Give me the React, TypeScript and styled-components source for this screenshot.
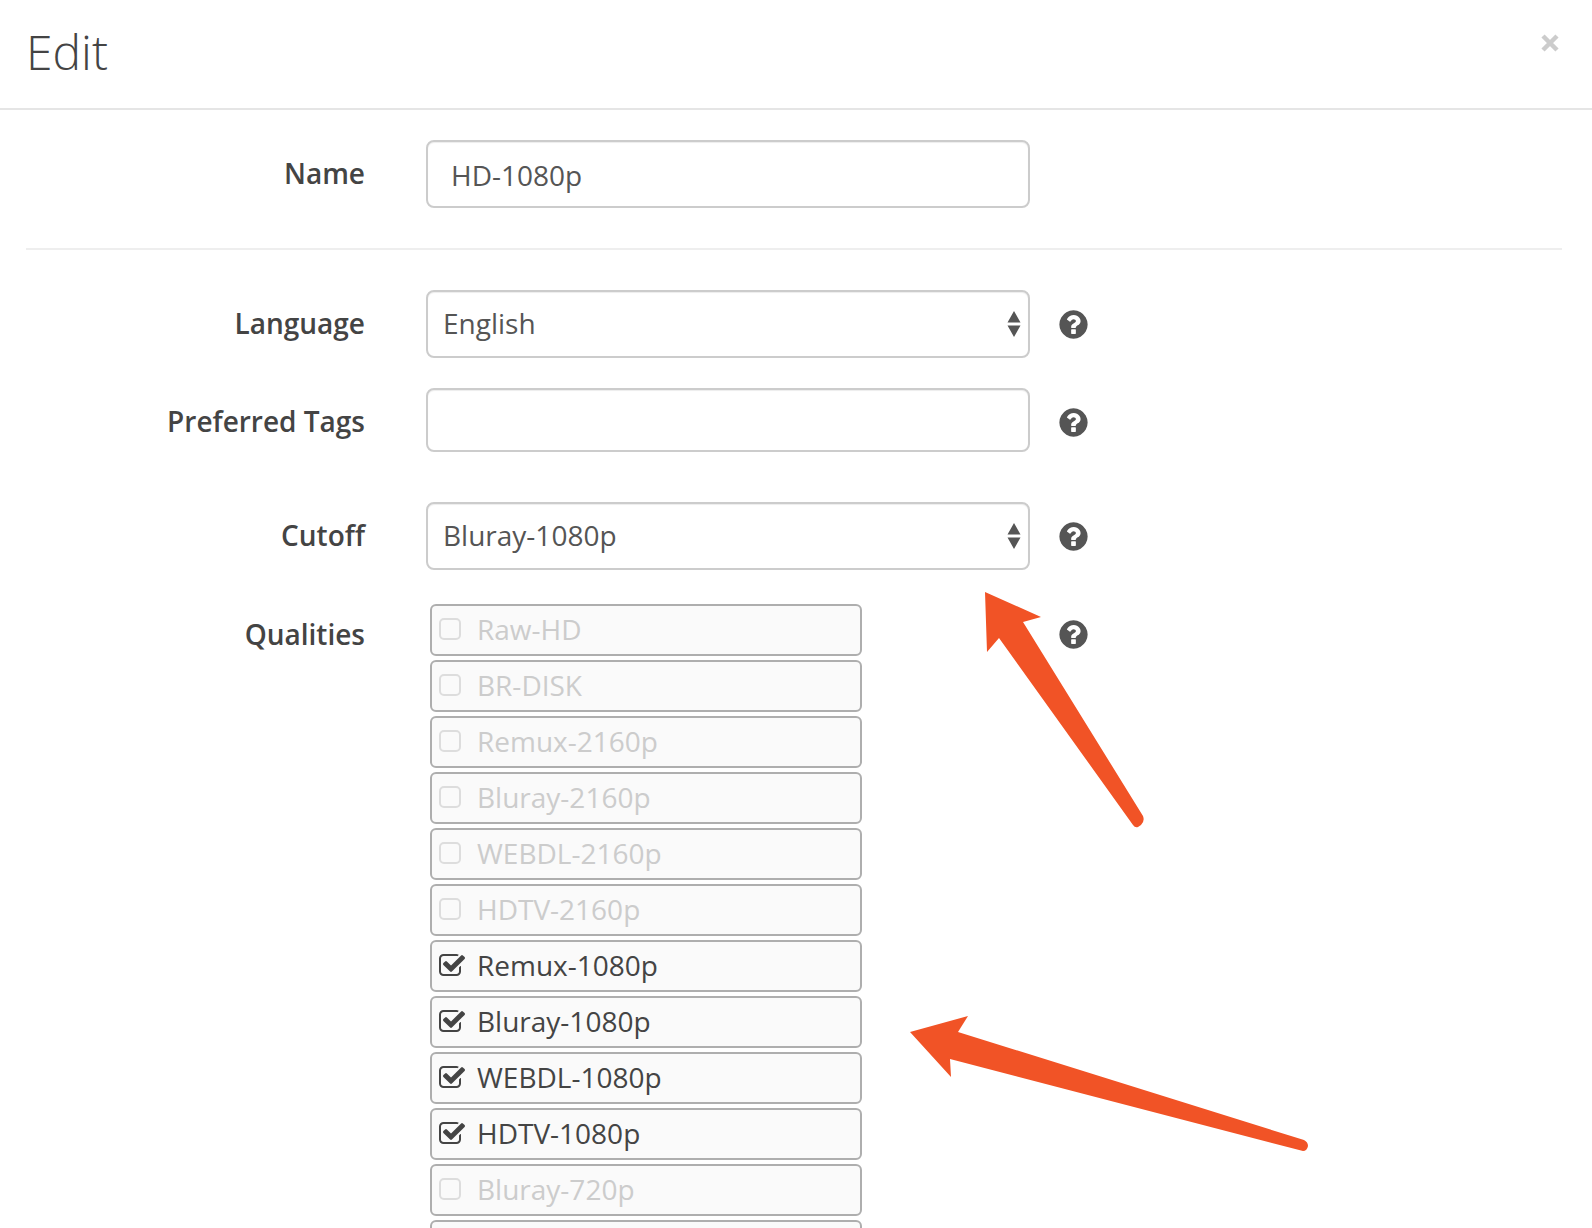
import styled, { createGlobalStyle } from "styled-components";

const GlobalStyle = createGlobalStyle`
  html, body {
    margin: 0;
    height: 1228px;
    overflow: hidden;
    background: #fff;
  }
  body {
    font-family: "Open Sans", "Noto Sans", sans-serif;
    color: #555;
  }
`;

const Modal = styled.div`
  position: relative;
  width: 1592px;
  height: 1228px;
  overflow: hidden;
`;

const Header = styled.header`
  height: 108px;
  border-bottom: 2px solid #e5e5e5;
  display: flex;
  justify-content: space-between;
  padding: 0 32px 0 26px;
`;

const Title = styled.h3`
  margin: 22px 0 0;
  font-size: 48px;
  line-height: 60px;
  font-weight: 300;
  color: #444;
`;

const CloseIcon = styled.svg`
  width: 20px;
  height: 20px;
  margin-top: 33px;
  color: #ccc;
`;

const Body = styled.div`
  padding: 30px 30px 0 26px;
`;

const FormRow = styled.div<{ $gap: number }>`
  display: grid;
  grid-template-columns: 339px 665px 1fr;
  margin-bottom: ${(p) => p.$gap}px;
`;

const Divider = styled.hr`
  border: 0;
  border-top: 2px solid #eee;
  margin: 0 0 40px;
`;

const Label = styled.label<{ $height: number }>`
  text-align: right;
  font-size: 28px;
  font-weight: 600;
  color: #444;
  line-height: ${(p) => p.$height}px;
`;

const Control = styled.div`
  margin-left: 61px;
  width: 604px;
`;

const TextInput = styled.input<{ $height: number }>`
  display: block;
  box-sizing: border-box;
  width: 604px;
  height: ${(p) => p.$height}px;
  border: 2px solid #ccc;
  border-radius: 8px;
  box-shadow: inset 0 1px 1px rgba(0, 0, 0, 0.075);
  padding: 2px 23px 0;
  font: 400 28px "Open Sans", sans-serif;
  color: #555;
  outline: none;
`;

const SelectWrap = styled.div`
  position: relative;
  width: 604px;
  height: 68px;
`;

const Select = styled.select<{ $nudge: number }>`
  display: block;
  appearance: none;
  box-sizing: border-box;
  width: 100%;
  height: 100%;
  background: #fff;
  border: 2px solid #ccc;
  border-radius: 8px;
  box-shadow: inset 0 1px 1px rgba(0, 0, 0, 0.075);
  padding: 0 15px ${(p) => p.$nudge}px;
  font: 400 28px "Open Sans", sans-serif;
  color: #555;
  outline: none;
`;

const SelectArrows = styled.svg`
  position: absolute;
  right: 9px;
  top: 20px;
  width: 14px;
  height: 28px;
  color: #555;
  pointer-events: none;
`;

const HelpIcon = styled.svg<{ $top: number }>`
  width: 33px;
  height: 33px;
  margin-top: ${(p) => p.$top}px;
  margin-left: 27px;
  color: #555;
`;

const QualityList = styled.div`
  display: flex;
  flex-direction: column;
  gap: 4px;
  padding-left: 4px;
  width: 432px;
`;

const QualityRow = styled.div<{ $on: boolean }>`
  flex: none;
  box-sizing: border-box;
  height: 52px;
  display: flex;
  align-items: center;
  gap: 12px;
  padding: 0 0 3px 8px;
  background: #fafafa;
  border: 2px solid #aeaeae;
  border-radius: 6px;
  font-size: 28px;
  color: ${(p) => (p.$on ? "#444" : "#ccc")};
`;

const EmptyBox = styled.span`
  flex: none;
  box-sizing: border-box;
  width: 22px;
  height: 22px;
  margin: 1px 4px 0 -1px;
  border: 2px solid #ddd;
  border-radius: 5px;
`;

const CheckIcon = styled.svg`
  flex: none;
  width: 28px;
  height: 28px;
  margin: 2px -1px 0 -2px;
  color: #444;
`;

const ArrowOverlay = styled.svg`
  position: absolute;
  left: 0;
  top: 0;
  width: 1592px;
  height: 1228px;
  pointer-events: none;
`;

const questionPath =
  "M1024 1376v-192q0-14-9-23t-23-9h-192q-14 0-23 9t-9 23v192q0 14 9 23t23 9h192q14 0 23-9t9-23zm256-672q0-88-55.5-163t-138.5-116-170-41q-243 0-371 213-15 24 8 42l132 100q7 6 19 6 16 0 25-12 53-68 86-92 34-24 86-24 48 0 85.5 26t37.5 59q0 38-20 61t-68 45q-63 28-115.5 86.5t-52.5 125.5v36q0 14 9 23t23 9h192q14 0 23-9t9-23q0-19 21.5-49.5t54.5-49.5q32-18 49-28.5t46-35 44.5-48 28-60.5 12.5-81zm384 192q0 209-103 385.5t-279.5 279.5-385.5 103-385.5-103-279.5-279.5-103-385.5 103-385.5 279.5-279.5 385.5-103 385.5 103 279.5 279.5 103 385.5z";

const checkPath =
  "M1472 930v318q0 119-84.5 203.5t-203.5 84.5h-832q-119 0-203.5-84.5t-84.5-203.5v-832q0-119 84.5-203.5t203.5-84.5h832q63 0 117 25 15 7 18 23 3 17-9 29l-49 49q-10 10-23 10-3 0-9-2-23-6-45-6h-832q-66 0-113 47t-47 113v832q0 66 47 113t113 47h832q66 0 113-47t47-113v-254q0-13 9-22l64-64q10-10 23-10 6 0 12 3 20 8 20 29zm231-489l-814 814q-24 24-57 24t-57-24l-430-430q-24-24-24-57t24-57l110-110q24-24 57-24t57 24l263 263 647-647q24-24 57-24t57 24l110 110q24 24 24 57t-24 57z";

const qualities = [
  { name: "Raw-HD", on: false },
  { name: "BR-DISK", on: false },
  { name: "Remux-2160p", on: false },
  { name: "Bluray-2160p", on: false },
  { name: "WEBDL-2160p", on: false },
  { name: "HDTV-2160p", on: false },
  { name: "Remux-1080p", on: true },
  { name: "Bluray-1080p", on: true },
  { name: "WEBDL-1080p", on: true },
  { name: "HDTV-1080p", on: true },
  { name: "Bluray-720p", on: false },
];

const Help = ({ top }: { top: number }) => (
  <HelpIcon $top={top} viewBox="0 0 1792 1792">
    <path fill="currentColor" d={questionPath} />
  </HelpIcon>
);

const Arrows = () => (
  <SelectArrows viewBox="0 0 14 28">
    <path fill="currentColor" d="M7 1l6.500 11.500h-13zM7 27l6.500-11.500h-13z" />
  </SelectArrows>
);

export default function App() {
  return (
    <Modal>
      <GlobalStyle />
      <Header>
        <Title>Edit</Title>
        <CloseIcon viewBox="0 0 20 20">
          <path d="M3 3l14 14M17 3L3 17" stroke="currentColor" strokeWidth="4.500" />
        </CloseIcon>
      </Header>
      <Body>
        <FormRow $gap={40}>
          <Label $height={66}>Name</Label>
          <Control>
            <TextInput $height={68} defaultValue="HD-1080p" />
          </Control>
        </FormRow>
        <Divider />
        <FormRow $gap={30}>
          <Label $height={66}>Language</Label>
          <Control>
            <SelectWrap>
              <Select $nudge={2} defaultValue="English">
                <option>English</option>
              </Select>
              <Arrows />
            </SelectWrap>
          </Control>
          <Help top={18} />
        </FormRow>
        <FormRow $gap={48}>
          <Label $height={66}>Preferred Tags</Label>
          <Control>
            <TextInput $height={64} />
          </Control>
          <Help top={18} />
        </FormRow>
        <FormRow $gap={34}>
          <Label $height={66}>Cutoff</Label>
          <Control>
            <SelectWrap>
              <Select $nudge={3} defaultValue="Bluray-1080p">
                <option>Bluray-1080p</option>
              </Select>
              <Arrows />
            </SelectWrap>
          </Control>
          <Help top={18} />
        </FormRow>
        <FormRow $gap={0}>
          <Label $height={60}>Qualities</Label>
          <Control>
            <QualityList>
              {qualities.map((q) => (
                <QualityRow key={q.name} $on={q.on}>
                  {q.on ? (
                    <CheckIcon viewBox="0 0 1792 1792">
                      <path fill="currentColor" d={checkPath} />
                    </CheckIcon>
                  ) : (
                    <EmptyBox />
                  )}
                  {q.name}
                </QualityRow>
              ))}
              <QualityRow $on={false} />
            </QualityList>
          </Control>
          <Help top={14} />
        </FormRow>
      </Body>
      <ArrowOverlay viewBox="0 0 1592 1228">
        <path
          fill="#f15326"
          d="M985 592L1041 617L1023 622L1143 816Q1145 821 1141 825L1138 827Q1135 828 1133 825L999 638L987 652Z"
        />
        <path
          fill="#f15326"
          d="M910 1032L968 1016L958 1032L1304 1140Q1308 1142 1308 1146Q1307 1151 1303 1151L950 1059L951 1077Z"
        />
      </ArrowOverlay>
    </Modal>
  );
}
